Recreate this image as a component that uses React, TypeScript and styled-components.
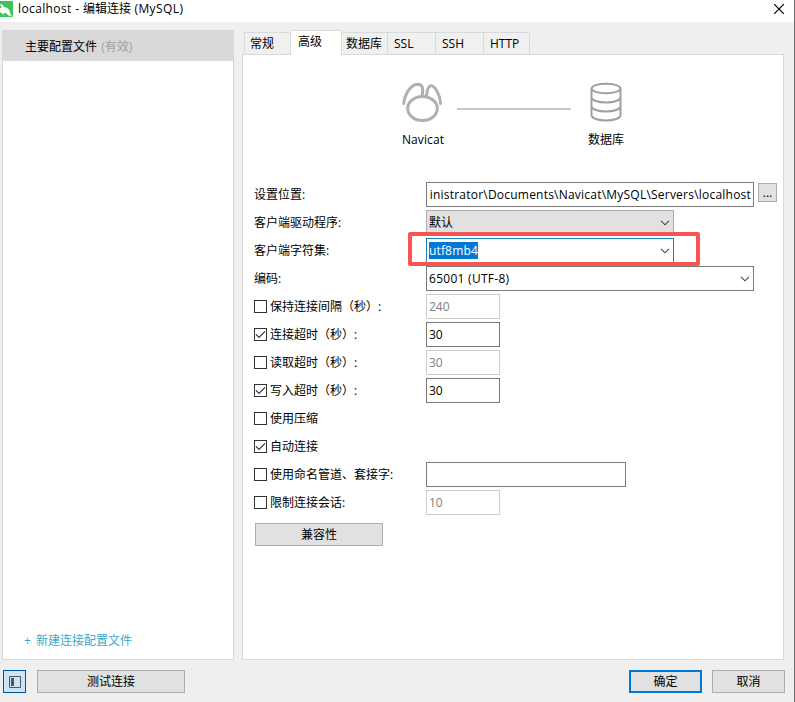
import React from 'react';
import styled, { createGlobalStyle, css } from 'styled-components';

const GlobalStyle = createGlobalStyle`
  * { box-sizing: border-box; }
  body { margin: 0; background: #efefef; }
`;

const Window = styled.div`
  width: 795px;
  height: 702px;
  display: flex;
  flex-direction: column;
  background: #efefef;
  border-right: 1px solid #6b6b6b;
  overflow: hidden;
  color: #000;
  font: 12px/16px 'Open Sans', 'Noto Sans CJK SC', sans-serif;
  white-space: pre;
`;

const TitleBar = styled.header`
  height: 22px;
  flex: none;
  display: flex;
  align-items: flex-start;
  background: #fff;
`;

const Title = styled.h1`
  margin: 0 0 0 5px;
  flex: 1;
  font-size: 12px;
  font-weight: 400;
  line-height: 17px;
`;

const Latin = styled.span<{ $gap: number }>`
  letter-spacing: ${p => p.$gap}px;
`;

const CloseIcon = styled.svg`
  margin: 4px 10px 0 0;
`;

const Body = styled.main`
  height: 638px;
  flex: none;
  display: flex;
  padding: 8px 10px 0 2px;
`;

const Sidebar = styled.aside`
  width: 232px;
  height: 630px;
  display: flex;
  flex-direction: column;
  justify-content: space-between;
  background: #fff;
  border: 1px solid #d7d7d7;
`;

const Profile = styled.div`
  height: 30px;
  padding-left: 22px;
  line-height: 31px;
  background: #d9d9d9;
`;

const Muted = styled.span`
  margin-left: 1px;
  color: #a0a0a0;
`;

const NewProfile = styled.a`
  padding: 0 0 10px 21px;
  color: #3aa9cc;
  word-spacing: 2px;
`;

const Content = styled.section`
  width: 542px;
  margin-left: 8px;
  display: flex;
  flex-direction: column;
`;

const Tabs = styled.nav`
  height: 25px;
  flex: none;
  display: flex;
  align-items: flex-end;
  padding-left: 2px;
`;

const Tab = styled.div<{ $w: number; $active?: boolean; $pad?: number }>`
  width: ${p => p.$w}px;
  height: 23px;
  padding-left: ${p => p.$pad ?? 6}px;
  line-height: 22px;
  border: 1px solid #dadada;
  border-left-width: 0;
  background: #f0f0f0;
  &:first-child { border-left-width: 1px; }
  ${p => p.$active && css`
    height: 26px;
    margin-bottom: -1px;
    background: #fff;
    border-bottom: 0;
    position: relative;
  `}
`;

const Panel = styled.div`
  flex: 1;
  margin-top: -1px;
  background: #fff;
  border: 1px solid #d9d9d9;
`;

const Diagram = styled.div`
  height: 125px;
  display: flex;
  padding: 26px 0 0 150px;
`;

const Node = styled.figure<{ $w: number }>`
  width: ${p => p.$w}px;
  margin: 0;
  display: flex;
  flex-direction: column;
  align-items: center;
  gap: 9px;
`;

const Link = styled.div`
  width: 114px;
  height: 2px;
  margin: 27px 8px 0 4px;
  background: #c9c9c9;
`;

const Row = styled.div`
  height: 28px;
  display: flex;
  position: relative;
  padding-left: 11px;
`;

const Label = styled.label`
  width: 172px;
  display: flex;
  align-items: center;
`;

const LabelText = styled.span`
  padding-top: 2px;
`;

const Box = styled.span`
  width: 13px;
  height: 13px;
  margin-right: 3px;
  display: flex;
  flex: none;
  border: 1px solid #333;
`;

const Field = styled.div<{ $w: number; $tone?: 'off' | 'grey' | 'focus' }>`
  width: ${p => p.$w}px;
  height: 25px;
  margin-top: 2px;
  padding: 0 2px;
  display: flex;
  align-items: center;
  justify-content: space-between;
  overflow: hidden;
  background: ${p => (p.$tone === 'grey' ? '#e1e1e1' : '#fff')};
  border: 1px solid ${p => ({ off: '#ccc', grey: '#adadad', focus: '#1883b8', none: '#7a7a7a' })[p.$tone ?? 'none']};
  color: ${p => (p.$tone === 'off' ? '#808080' : '#000')};
`;

const PathText = styled.span`
  flex: 1;
  display: flex;
  justify-content: flex-end;
  overflow: hidden;
  letter-spacing: 0.22px;
`;

const Selected = styled.span`
  height: 17px;
  line-height: 17px;
  letter-spacing: 0.15px;
  background: #0078d7;
  color: #fff;
`;

const Chevron = styled.svg`
  margin-right: 1px;
`;

const Highlight = styled.div`
  position: absolute;
  left: 165px;
  top: -4px;
  width: 292px;
  height: 34px;
  border: 4px solid #f65553;
  border-radius: 2px;
  z-index: 1;
`;

const Button = styled.button<{ $w: number; $primary?: boolean }>`
  width: ${p => p.$w}px;
  height: 23px;
  padding: 0;
  font: inherit;
  line-height: 19px;
  color: #000;
  background: #e1e1e1;
  border: ${p => (p.$primary ? '2px solid #0078d7' : '1px solid #adadad')};
`;

const BrowseButton = styled(Button)`
  height: 19px;
  margin: 3px 0 0 4px;
  line-height: 14px;
`;

const CompatButton = styled(Button)`
  display: block;
  margin: 7px 0 0 12px;
`;

const Footer = styled.footer`
  display: flex;
  padding: 10px 9px 0 3px;
`;

const ToggleButton = styled(Button)`
  display: flex;
  align-items: center;
  justify-content: center;
  margin-right: 11px;
  background: #cce4f7;
  border: 1px solid #005499;
`;

const Spacer = styled.div`
  flex: 1;
`;

const Gap = styled.div`
  width: 10px;
`;

const Down = () => (
  <Chevron width="10" height="6" viewBox="0 0 10 6" fill="none" stroke="#444" strokeWidth="1.1">
    <path d="M1 .8 5 4.8 9 .8" />
  </Chevron>
);

const Check = ({ on }: { on?: boolean }) => (
  <Box>
    {on && (
      <svg width="11" height="11" viewBox="0 0 11 11" fill="none" stroke="#333" strokeWidth="1.2">
        <path d="M1 5.3 4.1 8.4 10 2.3" />
      </svg>
    )}
  </Box>
);

const options: { text: string; on?: boolean; value?: string; w?: number; off?: boolean }[] = [
  { text: '保持连接间隔（秒）:', value: '240', off: true },
  { text: '连接超时（秒）:', on: true, value: '30' },
  { text: '读取超时（秒）:', value: '30', off: true },
  { text: '写入超时（秒）:', on: true, value: '30' },
  { text: '使用压缩' },
  { text: '自动连接', on: true },
  { text: '使用命名管道、套接字:', value: '', w: 200 },
  { text: '限制连接会话:', value: '10', off: true },
];

export default function App() {
  return (
    <>
      <GlobalStyle />
      <Window>
        <TitleBar>
          <svg width="13" height="17" viewBox="0 0 13 17">
            <path d="M0 1h12a1 1 0 0 1 1 1v14a1 1 0 0 1-1 1H0z" fill="#3fc45a" />
            <path d="M0 4 2.500 4.500 4 7 7.500 8 9.500 10.500 10.300 14 12 16 8.500 15.500 6 13.300 3.800 12.800 3.500 15.500 2 13 0 12.300V8.500L1.500 7.500z" fill="#fff" />
          </svg>
          <Title><Latin $gap={0.38}>localhost - </Latin>编辑连接<Latin $gap={0.4}> (MySQL)</Latin></Title>
          <CloseIcon width="10" height="10" viewBox="0 0 10 10" stroke="#000" strokeWidth="1.2">
            <path d="M0 0 10 10M10 0 0 10" />
          </CloseIcon>
        </TitleBar>
        <Body>
          <Sidebar>
            <Profile>主要配置文件 <Muted>(有效)</Muted></Profile>
            <NewProfile>+ 新建连接配置文件</NewProfile>
          </Sidebar>
          <Content>
            <Tabs>
              <Tab $w={47} $pad={5}>常规</Tab>
              <Tab $w={51} $pad={7} $active>高级</Tab>
              <Tab $w={46} $pad={4}>数据库</Tab>
              <Tab $w={48}>SSL</Tab>
              <Tab $w={48}>SSH</Tab>
              <Tab $w={46}>HTTP</Tab>
            </Tabs>
            <Panel>
              <Diagram>
                <Node $w={60}>
                  <svg width="42" height="42" viewBox="0 0 42 42" fill="none" stroke="#b0b0b0" strokeWidth="3" strokeLinecap="round">
                    <ellipse cx="20.500" cy="27.500" rx="14.800" ry="12" />
                    <path d="M1.800 22.500C2.500 13 9 3.500 15.500 3.200 20.500 3 21.800 8 20 15" />
                    <path d="M24.500 15C25 9.500 26.500 4.800 29 4.800 33 4.800 38.500 14.500 38.500 22.500" />
                  </svg>
                  <Latin $gap={0.1}>Navicat</Latin>
                </Node>
                <Link />
                <Node $w={54}>
                  <svg width="32" height="42" viewBox="0 0 32 42" fill="none" stroke="#a0a0a0" strokeWidth="2">
                    <ellipse cx="16" cy="7.500" rx="14.500" ry="4.800" />
                    <path d="M1.500 7.500v26.500c0 3.200 6.500 5.500 14.500 5.500s14.500-2.300 14.500-5.500V7.500M1.500 16c0 3.200 6.500 5.500 14.500 5.500s14.500-2.300 14.500-5.500M1.500 25c0 3.200 6.500 5.500 14.500 5.500s14.500-2.300 14.500-5.500" />
                  </svg>
                  <span>数据库</span>
                </Node>
              </Diagram>
              <Row>
                <Label><LabelText>设置位置:</LabelText></Label>
                <Field $w={328}>
                  <PathText>inistrator\Documents\Navicat\MySQL\Servers\localhost</PathText>
                </Field>
                <BrowseButton $w={19}>...</BrowseButton>
              </Row>
              <Row>
                <Label><LabelText>客户端驱动程序:</LabelText></Label>
                <Field $w={248} $tone="grey">默认<Down /></Field>
              </Row>
              <Row>
                <Label><LabelText>客户端字符集:</LabelText></Label>
                <Field $w={248} $tone="focus"><Selected>utf8mb4</Selected><Down /></Field>
                <Highlight />
              </Row>
              <Row>
                <Label><LabelText>编码:</LabelText></Label>
                <Field $w={328}><Latin $gap={0.28}>65001 (UTF-8)</Latin><Down /></Field>
              </Row>
              {options.map(o => (
                <Row key={o.text}>
                  <Label><Check on={o.on} /><LabelText>{o.text}</LabelText></Label>
                  {o.value !== undefined && (
                    <Field $w={o.w ?? 74} $tone={o.off ? 'off' : undefined}>{o.value}</Field>
                  )}
                </Row>
              ))}
              <CompatButton $w={128}>兼容性</CompatButton>
            </Panel>
          </Content>
        </Body>
        <Footer>
          <ToggleButton $w={23} aria-label="切换侧栏">
            <svg width="12" height="12" viewBox="0 0 12 12">
              <path d="M.5.5h11v11H.5z" fill="none" stroke="#555" />
              <path d="M2 2h3v8H2z" fill="#555" />
            </svg>
          </ToggleButton>
          <Button $w={148}>测试连接</Button>
          <Spacer />
          <Button $w={73} $primary>确定</Button>
          <Gap />
          <Button $w={73}>取消</Button>
        </Footer>
      </Window>
    </>
  );
}
